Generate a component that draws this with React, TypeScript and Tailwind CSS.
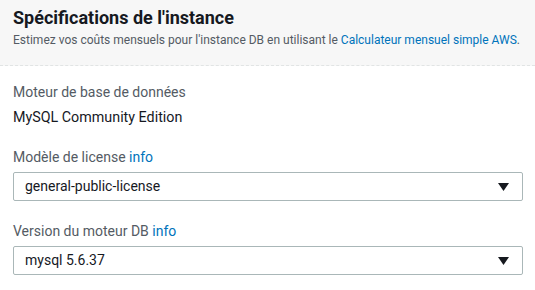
import React from "react";

function Caret() {
  return (
    <svg width="11" height="8" viewBox="0 0 11 8" className="shrink-0">
      <path d="M0 0 H11 L5.5 8 Z" fill="#16191f" />
    </svg>
  );
}

function Select({ value }: { value: string }) {
  return (
    <div className="flex h-[29px] items-center justify-between rounded-[2px] border border-[#aab7b8] bg-white pl-[11px] pr-[13px] text-[14px] text-[#16191f]">
      <span>{value}</span>
      <Caret />
    </div>
  );
}

export default function App() {
  return (
    <div
      className="h-[290px] w-[535px] overflow-hidden bg-white"
      style={{ fontFamily: "Roboto, 'Open Sans', sans-serif" }}
    >
      <div className="border-b border-dashed border-[#e1e4e4] bg-[#f7f7f7] px-[13px] pt-[6px] pb-[17px]">
        <h1 className="text-[18px] font-bold leading-[24px] text-[#16191f]">
          Spécifications de l'instance
        </h1>
        <p className="mt-[2px] text-[12px] leading-[16px] text-[#545b64]">
          Estimez vos coûts mensuels pour l'instance DB en utilisant le{" "}
          <span className="text-[#0073bb]">Calculateur mensuel simple AWS</span>.
        </p>
      </div>
      <div className="px-[13px] pt-[16px]">
        <div className="text-[14px] leading-[20px] text-[#545b64]">Moteur de base de données</div>
        <div className="mt-[5px] text-[14.3px] leading-[20px] text-[#16191f]">MySQL Community Edition</div>
        <div className="mt-[20px] text-[14px] leading-[20px] text-[#545b64]">
          Modèle de license <span className="text-[#0073bb]">info</span>
        </div>
        <div className="mt-[5px] w-[510px]">
          <Select value="general-public-license" />
        </div>
        <div className="mt-[20px] text-[14px] leading-[20px] text-[#545b64]">
          Version du moteur DB <span className="text-[#0073bb]">info</span>
        </div>
        <div className="mt-[5px] w-[510px]">
          <Select value="mysql 5.6.37" />
        </div>
      </div>
    </div>
  );
}
